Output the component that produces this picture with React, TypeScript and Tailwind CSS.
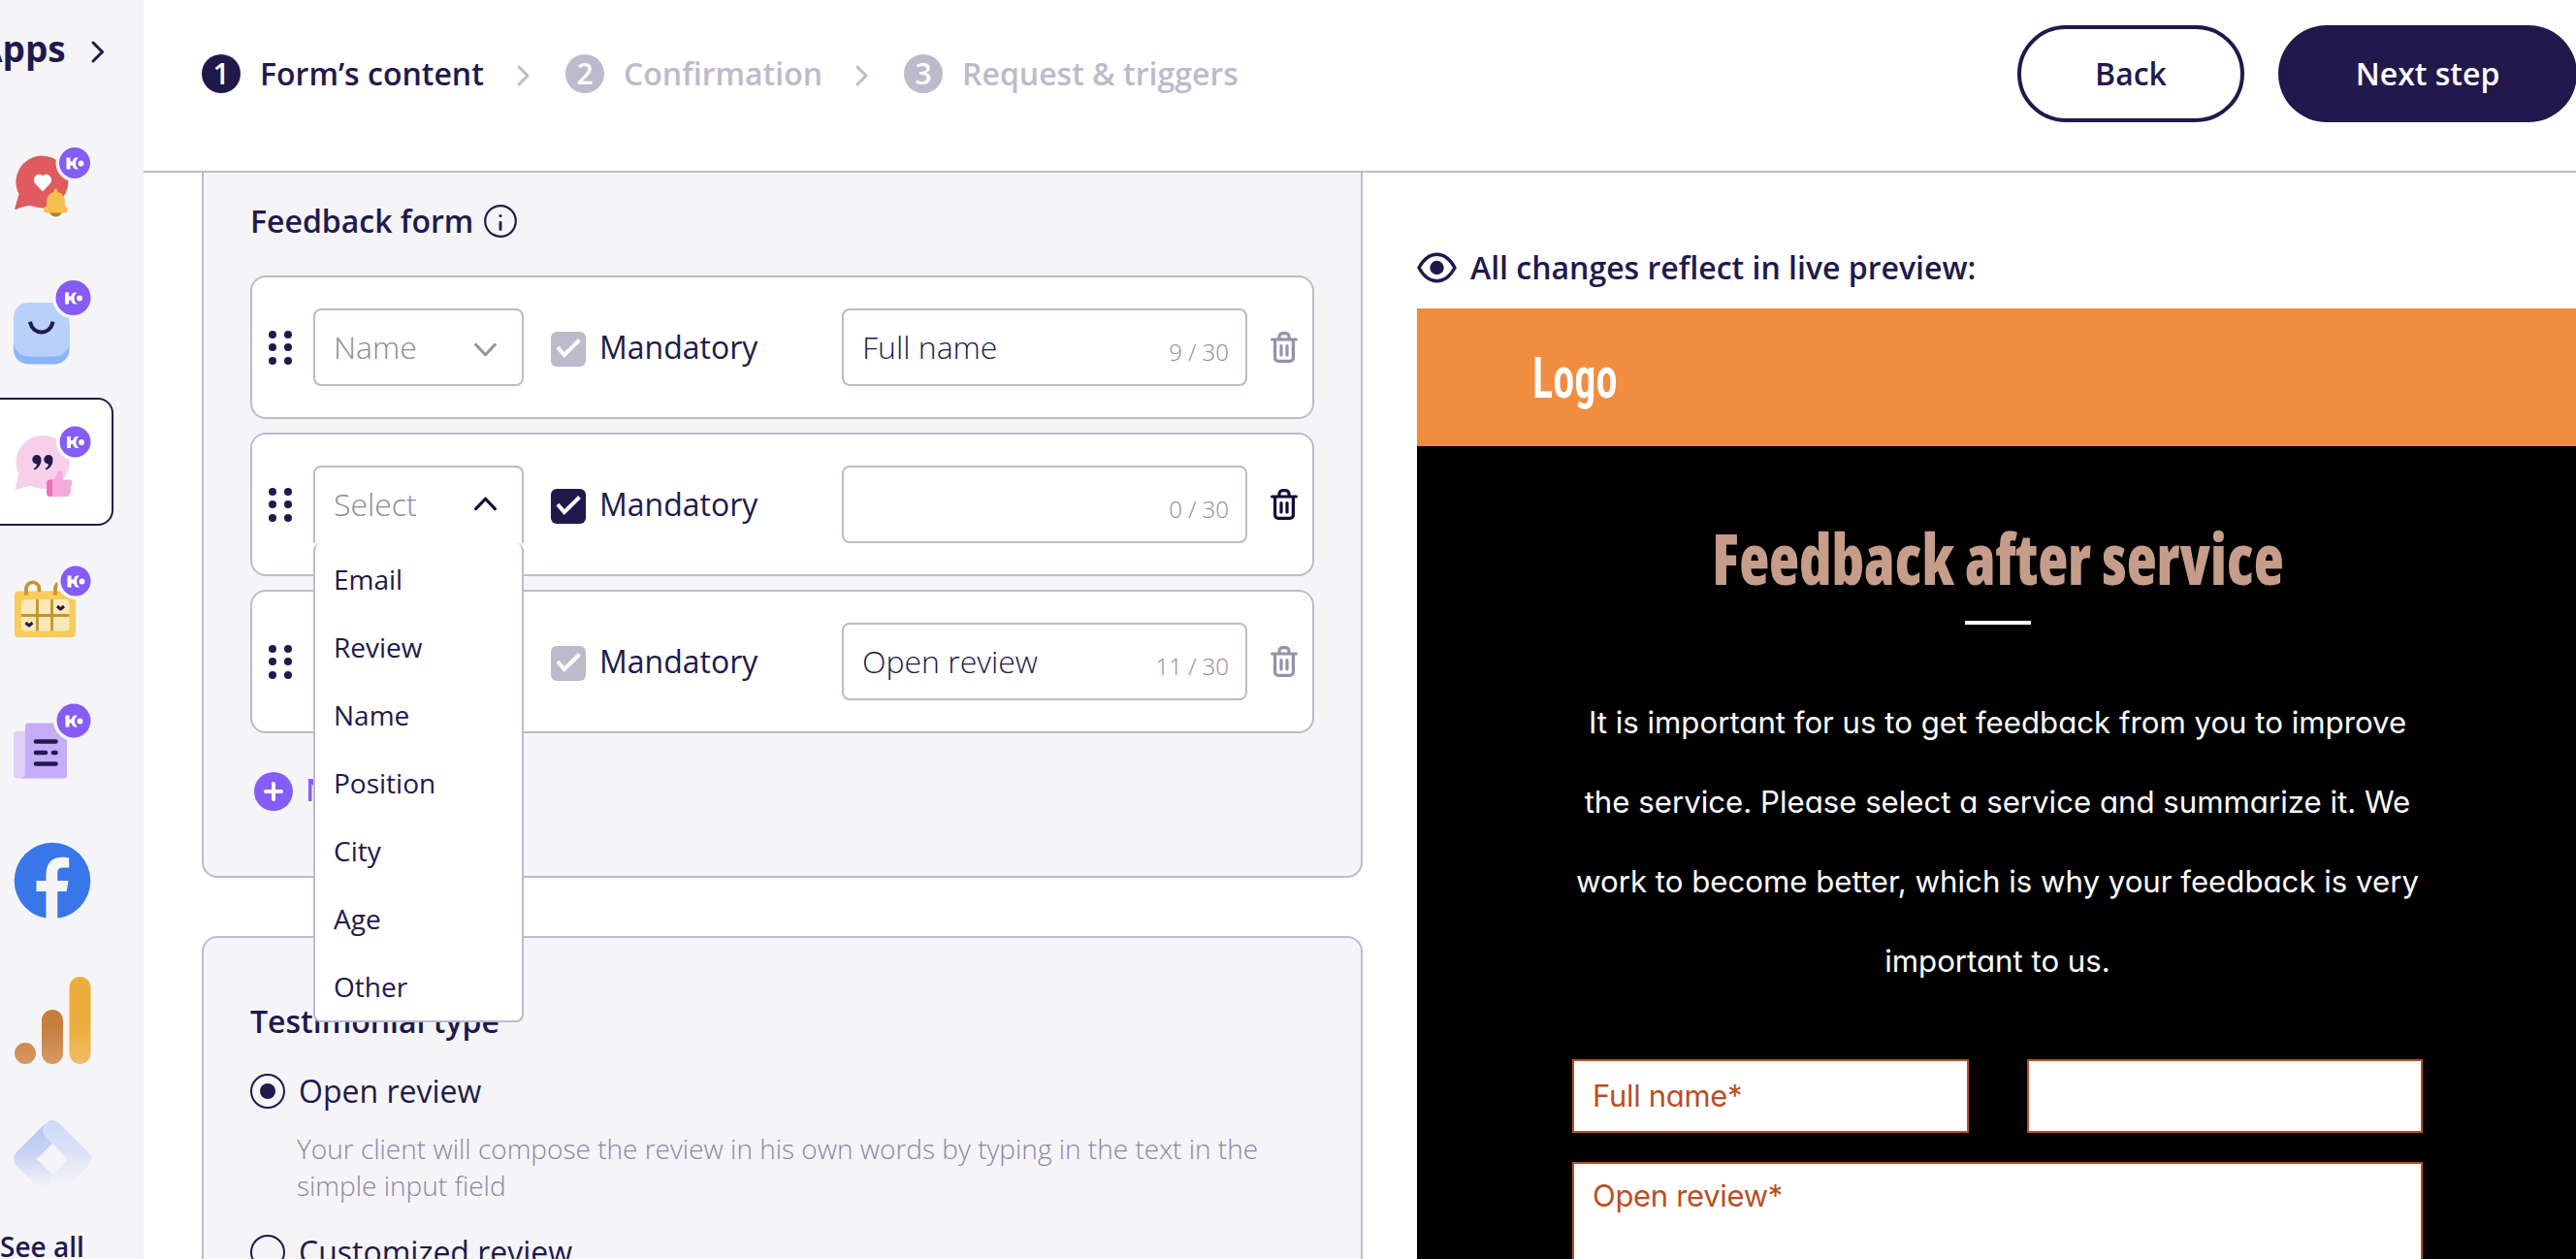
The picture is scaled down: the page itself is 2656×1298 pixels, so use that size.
import { useState } from 'react'
import { clsx } from 'clsx'

const options = ['Email', 'Review', 'Name', 'Position', 'City', 'Age', 'Other']

const steps = [
    { label: 'Form’s content', width: 'w-[230px]', active: true },
    { label: 'Confirmation', width: 'w-[204px]', active: false },
    { label: 'Request & triggers', width: 'w-[284px]', active: false },
]

const fields = [
    { type: 'Name', value: 'Full name', locked: true },
    { type: '', value: '', locked: false },
    { type: 'Review', value: 'Open review', locked: true },
]

/* Round K badge on the corner of the app icons */
function Badge({ cx, cy, r, halo = '#f5f5f8' }: { cx: number; cy: number; r: number; halo?: string }) {
    return (
        <g>
            <circle cx={cx} cy={cy} r={r + 3.5} fill={halo} />
            <circle cx={cx} cy={cy} r={r} fill="#865cf6" />
            <g transform={`translate(${cx} ${cy + 0.5})`}>
                <path d="M-8.500 -6h4v4h2.200c1-2 1.400-4 4-4h2.300c-4 3-4 9 0 12h-2.300c-2.600 0-3-2-4-4h-2.200v4h-4z" fill="white" />
                <circle cx="6.500" cy="0" r="2.900" fill="white" />
            </g>
        </g>
    )
}

function Chevron({ className, d }: { className?: string; d: string }) {
    return (
        <svg className={className} viewBox="0 0 24 24" fill="none" stroke="currentColor" strokeWidth="3" strokeLinecap="round" strokeLinejoin="round">
            <path d={d} />
        </svg>
    )
}

function Sidebar() {
    return (
        <aside className="flex h-full w-[148px] shrink-0 flex-col overflow-hidden bg-[#f5f5f8]">
            <div className="flex h-[150px] shrink-0 items-start pt-[26px]">
                <span className="-ml-[23px] w-[90px] text-[37px] leading-[48px] font-bold">Apps</span>
                <Chevron className="mt-[15px] ml-[22px] size-6" d="M7 3l9.500 9.500L7 22" />
            </div>

            {/* Notifications */}
            <svg className="ml-[14px] h-[76px] w-[86px] shrink-0" viewBox="0 0 86 76">
                <path d="M29 10.500a27 27 0 1 1-11 51.500c-5 0-11 2-15.500 4-1 .300-1.600-.200-1.200-1.200L5.500 50A27 27 0 0 1 29 10.500z" fill="#e05a5e" />
                <path d="M30 47.500l-7.300-7.700c-5.200-6 2.500-13.800 7.300-8.300 4.800-5.500 12.500 2.300 7.300 8.300z" fill="white" />
                <path d="M37 68h13a6 5 0 0 1-13 0z" fill="#ab8528" />
                <path d="M43.500 44.500c1 0 1.800 1 2 3.500 4.500 1 7.500 5 7.500 10v4.500c1.500.5 3 1.500 3 4 0 2-1 3-3 3H34c-2 0-3-1-3-3 0-2.500 1.500-3.500 3-4V58c0-5 3-9 7.500-10 .2-2.500 1-3.500 2-3.500z" fill="#f4c04f" />
                <Badge cx={63} cy={18} r={16} />
            </svg>

            {/* Shop */}
            <svg className="mt-[62px] ml-[14px] h-[90px] w-[86px] shrink-0" viewBox="0 0 86 90">
                <rect x="0" y="32" width="57.500" height="55.500" rx="15" fill="#8bb4fa" />
                <rect x="0" y="24" width="57.500" height="55.500" rx="15" fill="#b9d0fb" />
                <path d="M17.500 45.500a11.500 11.500 0 0 0 22.500 0" fill="none" stroke="#21194c" strokeWidth="4" strokeLinecap="square" />
                <Badge cx={61.5} cy={19} r={18} />
            </svg>

            {/* Feedback, the selected app */}
            <div className="mt-8 h-[132px] w-[117px] shrink-0 rounded-r-2xl border-2 border-l-0 border-[#21194c] bg-white pt-[26px]">
                <svg className="ml-[14px] h-[76px] w-[86px]" viewBox="0 0 86 76">
                    <path d="M29.500 11a27 27.500 0 1 1-11 52c-5 0-11 2-15.500 4-1 .300-1.600-.200-1.200-1.200L5.500 51A27 27.500 0 0 1 29.500 11z" fill="#f6cfea" />
                    <path d="M24 31a4.500 4.500 0 0 1 4.500 5c0 5-3 9-7 10.500l-.800-1.500c2-1 3.200-2.500 3.300-4.500a4.500 4.500 0 0 1 0-9.500zM36 31a4.500 4.500 0 0 1 4.500 5c0 5-3 9-7 10.500l-.800-1.500c2-1 3.200-2.500 3.300-4.500a4.500 4.500 0 0 1 0-9.500z" fill="#21194c" />
                    <path d="M39.500 56.500c4 0 4-4 6-7.500 1.500-2.500 6-1 5.500 2.500L50 56.500h7.500c2 0 3 1.300 2.700 3L58.500 70c-.5 3-2 4-4.500 4H39.500z" fill="#f3acd9" />
                    <path d="M40 56.500V74h-2.500c-2 0-3.500-1.500-3.500-4v-9.500c0-2.500 1.500-4 3.500-4z" fill="#ef6cbd" />
                    <Badge cx={63.5} cy={17.5} r={16} halo="#fff" />
                </svg>
            </div>

            {/* Calendar */}
            <svg className="mt-10 ml-[14px] h-[78px] w-[86px] shrink-0" viewBox="0 0 86 78">
                <rect x="1" y="27.500" width="63" height="47.500" rx="4" fill="#f8cb5c" />
                <rect x="8" y="36" width="49.500" height="32.500" rx="4" fill="#fbe8b7" />
                <path d="M24.500 36v32.500M39.500 36v32.500M8 52.500h49.500" stroke="#c3952f" strokeWidth="2.800" />
                <path d="M13 31.500V25a6.700 6.700 0 0 1 13.400 0v3M43 31.500V25a6.700 6.700 0 0 1 13.400 0v3" fill="none" stroke="#c3952f" strokeWidth="3.800" />
                <path d="M45 43l3.500 3 3.500-3M12.500 60l3.500 3 3.500-3" fill="none" stroke="#21194c" strokeWidth="3" strokeLinejoin="round" />
                <Badge cx={64} cy={17} r={15.5} />
            </svg>

            {/* Forms */}
            <svg className="mt-[65px] ml-[14px] h-[80px] w-[86px] shrink-0" viewBox="0 0 86 80">
                <rect x="0" y="29" width="24" height="48.500" rx="4" fill="#decffb" />
                <path d="M15 20.500h37a3 3 0 0 1 3 3v51a3 3 0 0 1-3 3H8q4-1.500 4-5v-49a3 3 0 0 1 3-3z" fill="#c5adf9" />
                <path d="M23 39.500h20.500M23 51h10M41 51h2.500M23 62.500h20.500" stroke="#21194c" strokeWidth="4.600" strokeLinecap="round" />
                <Badge cx={62} cy={18} r={17.5} />
            </svg>

            {/* Facebook */}
            <svg className="mt-[63px] ml-[14px] h-[80px] w-[80px] shrink-0" viewBox="0 0 80 80">
                <circle cx="40" cy="40" r="39.300" fill="#3876ea" />
                <path d="M33.500 80V51H23.500V40h10v-5.500C33.500 22 39 15.700 50 15.700c3 0 5 .3 7.200.7v10.200H51c-4.500 0-5.700 2-5.700 6V40h11.200l-1.800 11h-9.400v29z" fill="#f5f5f8" />
            </svg>

            {/* Analytics */}
            <svg className="mt-[58px] ml-[14px] h-[92px] w-[80px] shrink-0" viewBox="0 0 80 92">
                <defs>
                    <linearGradient id="ga-dark" gradientUnits="userSpaceOnUse" x1="0" y1="52" x2="0" y2="92">
                        <stop stopColor="#c87d3c" />
                        <stop offset="1" stopColor="#d69a68" />
                    </linearGradient>
                    <linearGradient id="ga-light" gradientUnits="userSpaceOnUse" x1="0" y1="52" x2="0" y2="92">
                        <stop stopColor="#ebae3d" />
                        <stop offset="1" stopColor="#f0be68" />
                    </linearGradient>
                </defs>
                <circle cx="12" cy="80" r="11" fill="url(#ga-dark)" />
                <rect x="29" y="35" width="22" height="56" rx="11" fill="url(#ga-dark)" />
                <rect x="57.500" y="1" width="22" height="90" rx="11" fill="url(#ga-light)" />
            </svg>

            {/* Tag manager, fading out */}
            <svg className="mt-[57px] ml-[14px] h-[72px] w-[80px] shrink-0" viewBox="0 0 80 72">
                <defs>
                    <linearGradient id="tm-left" gradientUnits="userSpaceOnUse" x1="0" y1="0" x2="0" y2="72">
                        <stop stopColor="#b0c6f3" />
                        <stop offset=".5" stopColor="#c9d4f4" />
                        <stop offset=".97" stopColor="#f5f5f8" />
                    </linearGradient>
                    <linearGradient id="tm-right" gradientUnits="userSpaceOnUse" x1="0" y1="0" x2="0" y2="72">
                        <stop stopColor="#cbdaf7" />
                        <stop offset=".5" stopColor="#dfe4f6" />
                        <stop offset=".97" stopColor="#f5f5f8" />
                    </linearGradient>
                </defs>
                <path d="M32 4L3 33q-6 7 0 14l28 28 17-11-24-24 20-20z" fill="url(#tm-left)" />
                <path d="M33 3q7-6 14 0l30 30q6 7 0 14L48 76 36 60l20-20-23-23q-6-7 0-14z" fill="url(#tm-right)" />
            </svg>

            <span className="mt-[39px] shrink-0 text-[28px] leading-[38px] font-semibold">See all</span>
        </aside>
    )
}

function Header() {
    return (
        <header className="flex h-[178px] shrink-0 items-start justify-between border-b-2 border-[#bdbacb] bg-white pt-[26px] pl-[60px]">
            <div className="flex h-[100px] items-center">
                {steps.map((step, i) => (
                    <div key={step.label} className={clsx('flex items-center', step.active ? 'text-[#21194c]' : 'text-[#bdbacb]')}>
                        <span className={clsx('flex size-10 items-center justify-center rounded-full text-[30px] leading-none font-semibold text-white', step.active ? 'bg-[#21194c]' : 'bg-[#bdbacb]')}>
                            {i + 1}
                        </span>
                        <span className={clsx('ml-5 text-[32px] font-semibold whitespace-nowrap', step.width)}>{step.label}</span>
                        {i < 2 && <Chevron className="mt-1 mr-[32px] ml-[29px] size-6 text-[#bdbacb]" d="M8 3l9 9-9 9" />}
                    </div>
                ))}
            </div>
            <div className="-mr-px flex gap-[35px] text-[32px] font-semibold">
                <button className="h-[100px] w-[234px] rounded-full border-4 border-[#21194c]">Back</button>
                <button className="h-[100px] w-[308px] rounded-full bg-[#21194c] text-white">Next step</button>
            </div>
        </header>
    )
}

function Trash({ className }: { className?: string }) {
    return (
        <svg className={clsx('h-8 w-7', className)} viewBox="0 0 28 32" fill="none" stroke="currentColor" strokeWidth="3.200" strokeLinecap="round" strokeLinejoin="round">
            <path d="M1.600 8h24.800M9 7.500V5a3.400 3.400 0 0 1 3.500-3.400h3A3.400 3.400 0 0 1 19 5v2.500" />
            <path d="M4.600 8.500V27a3.400 3.400 0 0 0 3.400 3.400h12a3.400 3.400 0 0 0 3.400-3.400V8.500M11 14.500v9.500M17 14.500v9.500" />
        </svg>
    )
}

function FieldRow({ type, value, locked }: { type: string; value: string; locked: boolean }) {
    const [open, setOpen] = useState(!type)

    return (
        <div className="flex h-[148px] items-center rounded-2xl border-2 border-[#bdbacb] bg-white pl-[17px]">
            {/* Drag handle */}
            <div className="grid grid-cols-2 gap-x-2 gap-y-[5.500px]">
                {[0, 1, 2, 3, 4, 5].map((dot) => (
                    <span key={dot} className="size-2 rounded-full bg-[#21194c]" />
                ))}
            </div>

            <div className="relative ml-[22px]">
                <button
                    onClick={() => setOpen(!open)}
                    className={clsx(
                        'flex h-20 w-[217px] items-center justify-between rounded-lg border-2 border-[#bdbacb] bg-white pr-[25px] pl-[19px] text-[32px] font-light',
                        open && 'rounded-b-none border-b-0 pb-0.5',
                        type ? 'text-[#8c8c8c]' : 'text-[#8b87a4]'
                    )}
                >
                    {type || 'Select'}
                    <Chevron className={clsx('size-[25px]', open ? 'text-[#140c35]' : 'mt-1 text-[#969696]')} d={open ? 'M2.500 16l9.500-10 9.500 10' : 'M2.500 7l9.500 10 9.500-10'} />
                </button>
                {/* Options list */}
                {open && (
                    <ul className="absolute top-20 left-0 z-10 w-[217px] rounded-lg border-2 border-t-0 border-[#bdbacb] bg-white pt-0.5">
                        {options.map((option) => (
                            <li key={option} className="flex h-[70px] items-center pl-[19px] text-[28px]">{option}</li>
                        ))}
                    </ul>
                )}
            </div>

            <span className={clsx('mt-1 ml-7 flex size-9 items-center justify-center rounded-md', locked ? 'bg-[#bdbacb]' : 'bg-[#21194c]')}>
                <svg className="size-9" viewBox="0 0 36 36" fill="none" stroke="white" strokeWidth="4">
                    <path d="M7 16l6.800 8L29.500 8.500" />
                </svg>
            </span>
            <span className="ml-3.5 w-[250px] text-[32px]">Mandatory</span>

            <div className="flex h-20 w-[418px] items-center justify-between rounded-lg border-2 border-[#bdbacb] pr-[17px] pl-[19px]">
                <span className="text-[32px] font-light">{value}</span>
                <span className="mt-2.5 text-[24px] font-light text-[#8b87a4]">{value.length} / 30</span>
            </div>
            <Trash className={clsx('ml-6', locked ? 'text-[#9491ab]' : 'text-[#140c35]')} />
        </div>
    )
}

function Radio({ checked }: { checked: boolean }) {
    return (
        <span className="flex size-9 items-center justify-center rounded-full border-2 border-[#21194c]">
            {checked && <span className="size-4 rounded-full bg-[#21194c]" />}
        </span>
    )
}

function Editor() {
    return (
        <div className="flex w-[1197px] shrink-0 flex-col gap-[60px]">
            {/* Feedback form */}
            <section className="h-[727px] shrink-0 rounded-b-2xl border-2 border-t-0 border-[#bdbacb] bg-[#f5f5f8] px-12 pt-[33px]">
                <div className="flex h-[34px] items-center">
                    <h2 className="w-[241px] text-[32px] font-semibold whitespace-nowrap">Feedback form</h2>
                    <svg className="size-[34px]" viewBox="0 0 34 34" fill="none" stroke="#21194c" strokeWidth="2.200" strokeLinecap="round">
                        <circle cx="17" cy="17" r="15.800" />
                        <path d="M17 18.500v7" strokeWidth="2.800" />
                        <circle cx="17" cy="11.500" r="1.500" fill="#21194c" stroke="none" />
                    </svg>
                </div>
                <div className="mt-[39px] flex flex-col gap-3.5">
                    {fields.map((field) => (
                        <FieldRow key={field.value} {...field} />
                    ))}
                </div>
                <button className="mt-10 ml-1 flex h-10 items-center text-[32px] font-semibold text-[#865cf6]">
                    <svg className="size-10" viewBox="0 0 40 40">
                        <circle cx="20" cy="20" r="20" fill="#865cf6" />
                        <path d="M20 12v16M12 20h16" stroke="white" strokeWidth="4" strokeLinecap="round" />
                    </svg>
                    <span className="-mt-1 ml-[13px] leading-[40px]">New</span>
                </button>
            </section>

            {/* Testimonial type */}
            <section className="h-[400px] shrink-0 rounded-2xl border-2 border-[#bdbacb] bg-[#f5f5f8] px-12 pt-[66px]">
                <h2 className="text-[32px] leading-[40px] font-semibold">Testimonial type</h2>
                <div className="mt-[34px] flex h-9 items-center gap-3.5 text-[32px]">
                    <Radio checked={true} />
                    <span>Open review</span>
                </div>
                <p className="mt-[22px] ml-12 w-[1020px] text-[28px] leading-[38px] font-light text-[#8b87a4]">
                    Your client will compose the review in his own words by typing in the text in the simple input field
                </p>
                <div className="mt-8 flex h-9 items-center gap-3.5 text-[32px]">
                    <Radio checked={false} />
                    <span>Customized review</span>
                </div>
            </section>
        </div>
    )
}

function Preview() {
    return (
        <div className="ml-14 flex min-w-0 flex-1 flex-col">
            <div className="mt-[76px] flex h-11 items-center">
                <svg className="h-8 w-[41px]" viewBox="0 0 41 32">
                    <path d="M2 16C12-2.300 29-2.300 39 16 29 34.300 12 34.300 2 16z" fill="none" stroke="#21194c" strokeWidth="3.400" />
                    <circle cx="20.500" cy="16" r="7.200" fill="#21194c" />
                </svg>
                <span className="ml-3.5 text-[32px] font-semibold whitespace-nowrap">All changes reflect in live preview:</span>
            </div>

            {/* Live preview */}
            <div className="mt-5 flex flex-1 flex-col bg-black">
                <div className="flex h-[142px] items-center bg-[#f08d3f] pt-0.5 pl-[119px]">
                    <span className="origin-left scale-x-[.74] font-['Roboto'] text-[60px] leading-none font-semibold text-white [font-stretch:75%]">Logo</span>
                </div>
                <div className="flex flex-1 flex-col items-center pl-0.5 font-['Inter'] text-[31px] [font-feature-settings:'cv11']">
                    <h1 className="mt-[65px] h-[101px] scale-x-[.877] font-['Open_Sans'] text-[73px] leading-[100px] font-extrabold whitespace-nowrap text-[#c69d8b] [font-stretch:75%]">Feedback after service</h1>
                    <div className="mt-3.5 h-1 w-[68px] bg-white" />
                    <p className="mt-[60px] text-center text-[31.200px] leading-[82px] whitespace-nowrap text-white">
                        It is important for us to get feedback from you to improve<br />
                        the service. Please select a service and summarize it. We<br />
                        work to become better, which is why your feedback is very<br />
                        important to us.
                    </p>
                    <div className="mt-[60px] grid w-[877px] grid-cols-2 gap-x-[60px] gap-y-[30px] tracking-[-.01em] text-[#b84f24]">
                        <div className="flex h-[76px] items-center border-2 border-[#b84f24] bg-white pl-[19px]">Full name*</div>
                        <div className="h-[76px] border-2 border-[#b84f24] bg-white" />
                        <div className="col-span-2 h-[160px] border-2 border-[#b84f24] bg-white pt-2.5 pl-[19px]">Open review*</div>
                    </div>
                </div>
            </div>
        </div>
    )
}

function App() {
    return (
        <div className="flex h-[1298px] w-[2656px] overflow-hidden bg-white font-['Open_Sans','Noto_Sans',sans-serif] text-[#21194c]">
            <Sidebar />
            <div className="flex min-w-0 flex-1 flex-col overflow-hidden">
                <Header />
                <main className="flex h-[1120px] overflow-hidden pl-[60px]">
                    <Editor />
                    <Preview />
                </main>
            </div>
        </div>
    )
}

export default App
